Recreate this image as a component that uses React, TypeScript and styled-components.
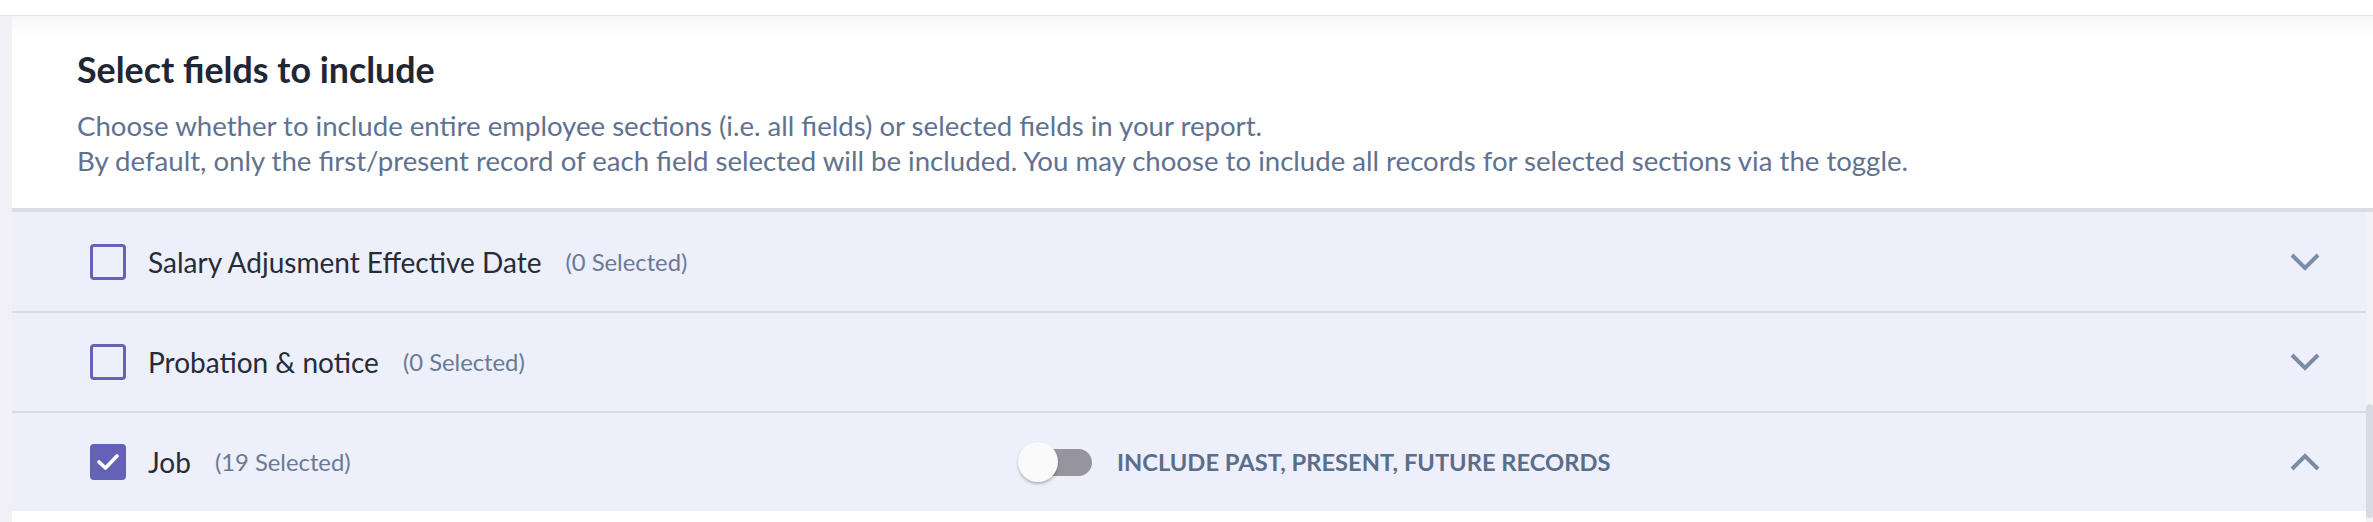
import styled, { createGlobalStyle } from "styled-components";

const GlobalStyle = createGlobalStyle`
  html, body {
    margin: 0;
    padding: 0;
    background: #ffffff;
    font-family: Lato, "Noto Sans", sans-serif;
  }
  * {
    box-sizing: border-box;
  }
`;

const Page = styled.div`
  width: 2373px;
  height: 522px;
  overflow: hidden;
  padding-top: 15px;
  background: #ffffff;
`;

const Frame = styled.div`
  display: flex;
  height: 507px;
  padding-left: 12px;
  background: #f0f0f6;
  border-top: 1px solid #e4e4f1;
`;

const Card = styled.div`
  flex: 1;
  display: flex;
  flex-direction: column;
  background: #ffffff;
`;

const Header = styled.div`
  padding: 34px 65px 30px;
  background: linear-gradient(#f7f7f9 0px, #ffffff 22px);
  border-bottom: 4px solid #dcdde2;
`;

const Title = styled.h2`
  margin: 0 0 18px;
  font-size: 35.8px;
  line-height: 40px;
  font-weight: 700;
  color: #1f2733;
`;

const Description = styled.p`
  margin: 0;
  font-size: 27.6px;
  line-height: 35px;
  color: #5f7290;
`;

const ScrollArea = styled.div`
  flex: 1;
  display: flex;
`;

const List = styled.div`
  flex: 1;
`;

const Row = styled.div<{ $first?: boolean }>`
  display: grid;
  grid-template-columns: 928px 1fr auto;
  align-items: center;
  height: ${({ $first }) => ($first ? "99px" : "100px")};
  padding: 0 46px 0 78px;
  background: #edeffb;
  border-top: ${({ $first }) => ($first ? "none" : "2px solid #d8dbe6")};
`;

const Section = styled.label`
  display: flex;
  align-items: center;
`;

const Box = styled.span<{ $checked: boolean }>`
  display: flex;
  align-items: center;
  justify-content: center;
  width: 36px;
  height: 36px;
  border-radius: 4px;
  border: 3px solid #6462b6;
  background: ${({ $checked }) => ($checked ? "#6462b6" : "transparent")};
`;

const Label = styled.span`
  margin-left: 22px;
  font-size: 28px;
  color: #262c38;
`;

const Count = styled.span`
  margin-left: 24px;
  font-size: 23.8px;
  color: #6a7a93;
`;

const ToggleGroup = styled.div`
  display: flex;
  align-items: center;
`;

const Switch = styled.span`
  display: flex;
  align-items: center;
  width: 74px;
`;

const Knob = styled.span`
  position: relative;
  z-index: 1;
  width: 40px;
  height: 40px;
  border-radius: 50%;
  background: #fafafa;
  box-shadow: 0 2px 3px rgba(0, 0, 0, 0.25);
`;

const Track = styled.span`
  width: 52px;
  height: 27px;
  margin-left: -18px;
  border-radius: 14px;
  background: #96959e;
`;

const ToggleLabel = styled.span`
  margin-left: 25px;
  font-size: 23.7px;
  font-weight: 700;
  color: #5a6e8a;
  text-transform: uppercase;
`;

const Chevron = styled.svg`
  display: block;
`;

const Scrollbar = styled.div`
  width: 7px;
  display: flex;
  flex-direction: column;
  justify-content: flex-end;
  background: #f3f3f6;
  padding-bottom: 4px;
`;

const Thumb = styled.div`
  height: 114px;
  border-radius: 4px;
  background: #d8dbe4;
`;

const sections = [
  { name: "Salary Adjusment Effective Date", selected: 0, open: false },
  { name: "Probation & notice", selected: 0, open: false },
  { name: "Job", selected: 19, open: true },
];

const Check = () => (
  <svg width="24" height="20" viewBox="0 0 24 20">
    <polyline
      points="3,10 9.5,16 21,4"
      fill="none"
      stroke="#ffffff"
      strokeWidth="3.6"
      strokeLinecap="round"
      strokeLinejoin="round"
    />
  </svg>
);

const Arrow = ({ up }: { up: boolean }) => (
  <Chevron width="30" height="18" viewBox="0 0 30 18">
    <polyline
      points={up ? "2,16 15,3 28,16" : "2,2 15,15 28,2"}
      fill="none"
      stroke="#7b8ca5"
      strokeWidth="4"
    />
  </Chevron>
);

export default function App() {
  return (
    <>
      <GlobalStyle />
      <Page>
        <Frame>
          <Card>
            <Header>
              <Title>Select fields to include</Title>
              <Description>
                Choose whether to include entire employee sections (i.e. all fields) or selected fields in your report.
                <br />
                By default, only the first/present record of each field selected will be included. You may choose to include all records for selected sections via the toggle.
              </Description>
            </Header>
            <ScrollArea>
              <List>
                {sections.map((s, i) => (
                  <Row key={s.name} $first={i === 0}>
                    <Section>
                      <Box $checked={s.selected > 0}>{s.selected > 0 && <Check />}</Box>
                      <Label>{s.name}</Label>
                      <Count>({s.selected} Selected)</Count>
                    </Section>
                    <div>
                      {s.selected > 0 && (
                        <ToggleGroup>
                          <Switch>
                            <Knob />
                            <Track />
                          </Switch>
                          <ToggleLabel>Include past, present, future records</ToggleLabel>
                        </ToggleGroup>
                      )}
                    </div>
                    <Arrow up={s.open} />
                  </Row>
                ))}
              </List>
              <Scrollbar>
                <Thumb />
              </Scrollbar>
            </ScrollArea>
          </Card>
        </Frame>
      </Page>
    </>
  );
}
